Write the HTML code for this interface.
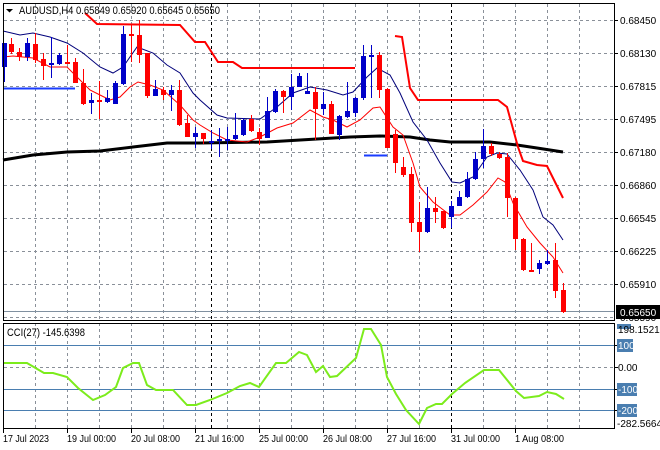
<!DOCTYPE html>
<html><head><meta charset="utf-8"><style>
html,body{margin:0;padding:0;background:#fff;}
svg{display:block;font-family:"Liberation Sans",sans-serif;}
</style></head><body>
<svg width="660" height="450" viewBox="0 0 660 450" xmlns="http://www.w3.org/2000/svg">
<rect width="660" height="450" fill="#fff"/>
<g stroke="#8a9099" stroke-width="1" stroke-dasharray="3,3" fill="none">
<path d="M4 20.5H614M4 53.5H614M4 86.5H614M4 119.5H614M4 152.5H614M4 185.5H614M4 218.5H614M4 251.5H614M4 284.5H614M4 317.5H614"/>
<path d="M35.5 4V320M67.5 4V320M99.5 4V320M131.5 4V320M163.5 4V320M195.5 4V320M227.5 4V320M259.5 4V320M291.5 4V320M323.5 4V320M355.5 4V320M387.5 4V320M419.5 4V320M483.5 4V320M515.5 4V320M547.5 4V320M579.5 4V320"/>
<path d="M35.5 323V428M67.5 323V428M99.5 323V428M131.5 323V428M163.5 323V428M195.5 323V428M227.5 323V428M259.5 323V428M291.5 323V428M323.5 323V428M355.5 323V428M387.5 323V428M419.5 323V428M483.5 323V428M515.5 323V428M547.5 323V428M579.5 323V428"/>
<path d="M4 367.5H614"/>
</g>
<g stroke="#000" stroke-width="1" stroke-dasharray="3,3">
<path d="M211.5 4V320M451.5 4V320M211.5 323V428M451.5 323V428"/>
</g>
<path d="M4 311.5H614" stroke="#8090a0" stroke-width="1"/>
<g stroke="#4a7eb0" stroke-width="1"><path d="M4 345.5H614M4 389.5H614M4 410.5H614"/></g>
<polyline fill="none" stroke="#000" stroke-width="3" points="3,160 33,155 67,152 100,151 133,147 167,143 200,143 267,142 317,139 350,137 380,136 410,137 430,140 450,142 490,142 517,145 537,148 563,152"/>
<polyline fill="none" stroke="#00007a" stroke-width="1" points="3,31 20,35 33,33 50,37 67,43 83,53 100,67 113,73 123,67 137,47 153,53 167,65 180,73 193,93 200,100 217,115 227,118 260,119 277,107 293,93 310,87 327,90 343,95 353,92 367,77 377,68 390,75 400,93 413,122 427,140 440,163 452,182 460,183 473,177 487,157 497,153 507,154 520,170 533,190 543,217 553,225 563,240"/>
<polyline fill="none" stroke="#ff0000" stroke-width="1" points="3,57 13,56 33,58 50,67 67,67 80,80 90,90 100,95 110,100 120,97 130,87 138,82 150,85 163,90 180,105 193,120 200,125 213,133 227,140 247,142 260,137 277,128 293,123 310,110 323,117 333,120 347,127 360,120 373,108 380,107 393,127 403,135 413,163 420,187 433,202 450,215 460,215 473,205 487,192 498,178 505,182 513,203 527,227 540,243 553,257 563,273"/>
<polyline fill="none" stroke="#ff0000" stroke-width="2" points="85,13 97,24 180,25 195,42 205,42 218,62 233,62 242,68 355,68"/>
<polyline fill="none" stroke="#ff0000" stroke-width="2" points="395,36 402,37 410,88 418,100 498,100 507,107 518,147 523,161 537,165 547,166 563,198"/>
<path d="M4 88.5H75M364 155.5H387" stroke="#1a3cff" stroke-width="2"/>
<g stroke="#0000c8" stroke-width="1" fill="#0000c8">
<path d="M4.5 43V82M27.5 38V61M51.5 37V78M59.5 53V65M91.5 93V114M107.5 90V103M115.5 81V104M123.5 26V85M155.5 80V96M171.5 85V111M195.5 127V148M211.5 130V149M219.5 128V157M227.5 127V150M235.5 113V140M243.5 118V136M267.5 97V138M275.5 89V113M291.5 74V110M299.5 73V87M307.5 73V94M323.5 92V115M339.5 115V140M347.5 82V118M355.5 97V117M363.5 45V100M371.5 45V98M427.5 187V233M451.5 201V228M459.5 191V206M467.5 172V198M475.5 152V180M483.5 129V168M539.5 260V274M547.5 250V265"/>
<g stroke="none">
<rect x="2" y="43" width="5" height="24"/><rect x="25" y="43" width="5" height="14"/><rect x="49" y="63" width="5" height="2"/><rect x="57" y="55" width="5" height="9"/><rect x="89" y="100" width="5" height="3"/><rect x="105" y="98" width="5" height="4"/><rect x="113" y="83" width="5" height="21"/><rect x="121" y="34" width="5" height="50"/><rect x="153" y="89" width="5" height="7"/><rect x="169" y="90" width="5" height="5"/><rect x="193" y="133" width="5" height="4"/><rect x="209" y="141" width="5" height="2"/><rect x="217" y="139" width="5" height="2"/><rect x="225" y="139" width="5" height="2"/><rect x="233" y="135" width="5" height="4"/><rect x="241" y="120" width="5" height="15"/><rect x="265" y="111" width="5" height="27"/><rect x="273" y="91" width="5" height="21"/><rect x="289" y="87" width="5" height="10"/><rect x="297" y="76" width="5" height="11"/><rect x="305" y="91" width="5" height="3"/><rect x="321" y="104" width="5" height="5"/><rect x="337" y="116" width="5" height="19"/><rect x="345" y="111" width="5" height="6"/><rect x="353" y="98" width="5" height="15"/><rect x="361" y="56" width="5" height="42"/><rect x="369" y="55" width="5" height="2"/><rect x="425" y="208" width="5" height="24"/><rect x="449" y="206" width="5" height="11"/><rect x="457" y="197" width="5" height="9"/><rect x="465" y="179" width="5" height="18"/><rect x="473" y="159" width="5" height="20"/><rect x="481" y="146" width="5" height="13"/><rect x="537" y="263" width="5" height="6"/><rect x="545" y="261" width="5" height="3"/>
</g></g>
<g stroke="#ff0000" stroke-width="1" fill="#ff0000">
<path d="M11.5 38V54M19.5 48V61M35.5 33V63M43.5 53V80M67.5 45V64M75.5 58V83M83.5 69V105M99.5 81V119M131.5 25V62M139.5 20V63M147.5 53V98M163.5 87V100M179.5 80V126M187.5 115V137M203.5 133V144M251.5 115V132M259.5 128V145M283.5 90V113M315.5 87V140M331.5 101V134M379.5 52V98M387.5 88V148M395.5 130V173M403.5 157V177M411.5 167V232M419.5 202V252M435.5 197V223M443.5 211V229M491.5 143V156M499.5 152V159M507.5 153V217M515.5 197V250M523.5 238V271M531.5 243V272M555.5 243V298M563.5 283V313"/>
<g stroke="none">
<rect x="9" y="44" width="5" height="8"/><rect x="17" y="52" width="5" height="5"/><rect x="33" y="44" width="5" height="16"/><rect x="41" y="59" width="5" height="7"/><rect x="65" y="62" width="5" height="2"/><rect x="73" y="62" width="5" height="21"/><rect x="81" y="83" width="5" height="21"/><rect x="97" y="100" width="5" height="2"/><rect x="129" y="34" width="5" height="2"/><rect x="137" y="35" width="5" height="20"/><rect x="145" y="53" width="5" height="43"/><rect x="161" y="90" width="5" height="5"/><rect x="177" y="90" width="5" height="35"/><rect x="185" y="123" width="5" height="14"/><rect x="201" y="133" width="5" height="6"/><rect x="249" y="119" width="5" height="12"/><rect x="257" y="132" width="5" height="7"/><rect x="281" y="91" width="5" height="6"/><rect x="313" y="92" width="5" height="17"/><rect x="329" y="104" width="5" height="30"/><rect x="377" y="55" width="5" height="35"/><rect x="385" y="89" width="5" height="59"/><rect x="393" y="134" width="5" height="29"/><rect x="401" y="167" width="5" height="8"/><rect x="409" y="174" width="5" height="49"/><rect x="417" y="222" width="5" height="10"/><rect x="433" y="208" width="5" height="4"/><rect x="441" y="211" width="5" height="17"/><rect x="489" y="146" width="5" height="8"/><rect x="497" y="154" width="5" height="4"/><rect x="505" y="157" width="5" height="41"/><rect x="513" y="198" width="5" height="41"/><rect x="521" y="239" width="5" height="31"/><rect x="529" y="270" width="5" height="2"/><rect x="553" y="260" width="5" height="31"/><rect x="561" y="290" width="5" height="22"/>
</g></g>
<polyline fill="none" stroke="#7cec1c" stroke-width="2" points="3,363 15,363 27,363 44,373 53,373 67,377 78,388 93,400 105,395 116,387 123,368 133,363 139,363 147,385 156,390 173,390 187,405 196,405 210,400 227,393 240,386 250,383 259,387 276,363 286,363 299,352 307,355 316,372 323,366 330,377 337,376 356,358 364,329 371,329 381,345 387,377 396,394 406,410 419,424 427,408 436,404 442,404 452,394 465,383 484,370 499,370 516,391 524,398 539,396 547,392 556,394 564,399"/>
<g fill="none" stroke="#000" stroke-width="1">
<path d="M3.5 3.5H614.5V320.5H3.5Z"/>
<path d="M3.5 323.5H614.5V428.5H3.5Z"/>
</g>
<g stroke="#000" stroke-width="1">
<path d="M614 20.5h4M614 53.5h4M614 86.5h4M614 119.5h4M614 152.5h4M614 185.5h4M614 218.5h4M614 251.5h4M614 284.5h4M614 345.5h4M614 367.5h4M614 389.5h4M614 410.5h4"/>
<path d="M3.5 428V433M67.5 428V433M131.5 428V433M195.5 428V433M259.5 428V433M323.5 428V433M387.5 428V433M451.5 428V433M515.5 428V433"/>
</g>
<path d="M6 9h7l-3.5 3.5z" fill="#000"/>
<text x="19" y="14" font-size="11" fill="#000" textLength="201" lengthAdjust="spacingAndGlyphs">AUDUSD,H4  0.65849 0.65920 0.65645 0.65650</text>
<text x="7" y="336" font-size="11" fill="#000" textLength="78" lengthAdjust="spacingAndGlyphs">CCI(27) -145.6398</text>
<g font-size="10" fill="#000">
<text x="620" y="24">0.68450</text>
<text x="620" y="57">0.68130</text>
<text x="620" y="90">0.67815</text>
<text x="620" y="123">0.67495</text>
<text x="620" y="156">0.67180</text>
<text x="620" y="189">0.66860</text>
<text x="620" y="222">0.66545</text>
<text x="620" y="255">0.66225</text>
<text x="620" y="288">0.65910</text>
<text x="620" y="321">0.65590</text>
</g>
<rect x="616" y="305" width="44" height="14" fill="#000"/>
<text x="620" y="316" font-size="10" fill="#fff">0.65650</text>
<rect x="617" y="324" width="14" height="5" fill="#4a7eb0"/>
<text x="618" y="333" font-size="10" fill="#000">198.1521</text>
<rect x="617" y="339" width="16" height="13" fill="#4a7eb0"/><text x="618" y="349" font-size="10" fill="#fff">100</text>
<text x="618" y="371" font-size="10" fill="#000">0.00</text>
<rect x="617" y="383" width="20" height="13" fill="#4a7eb0"/><text x="618" y="393" font-size="10" fill="#fff">-100</text>
<rect x="617" y="404" width="20" height="13" fill="#4a7eb0"/><text x="618" y="414" font-size="10" fill="#fff">-200</text>
<text x="617" y="427" font-size="10" fill="#000">-282.5664</text>
<g font-size="10" fill="#000" lengthAdjust="spacingAndGlyphs">
<text x="3" y="442" textLength="46" lengthAdjust="spacingAndGlyphs">17 Jul 2023</text>
<text x="67" y="442" textLength="49" lengthAdjust="spacingAndGlyphs">19 Jul 00:00</text>
<text x="131" y="442" textLength="49" lengthAdjust="spacingAndGlyphs">20 Jul 08:00</text>
<text x="195" y="442" textLength="49" lengthAdjust="spacingAndGlyphs">21 Jul 16:00</text>
<text x="259" y="442" textLength="49" lengthAdjust="spacingAndGlyphs">25 Jul 00:00</text>
<text x="323" y="442" textLength="49" lengthAdjust="spacingAndGlyphs">26 Jul 08:00</text>
<text x="387" y="442" textLength="49" lengthAdjust="spacingAndGlyphs">27 Jul 16:00</text>
<text x="451" y="442" textLength="49" lengthAdjust="spacingAndGlyphs">31 Jul 00:00</text>
<text x="515" y="442" textLength="49" lengthAdjust="spacingAndGlyphs">1 Aug 08:00</text>
</g>
</svg>
</body></html>
